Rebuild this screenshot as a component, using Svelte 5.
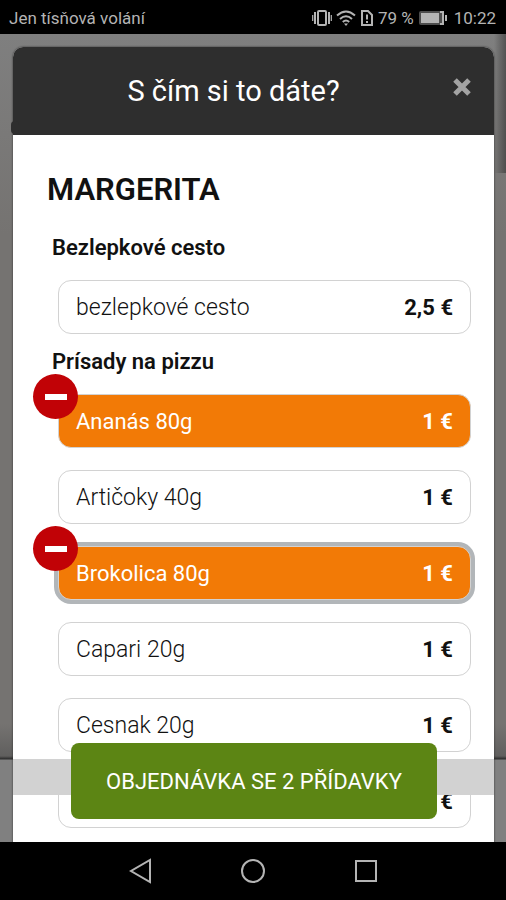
<script lang="ts">
  type Option = { id: string; name: string; price: string };
  type Group = { title: string; options: Option[] };

  const groups: Group[] = [
    {
      title: "Bezlepkové cesto",
      options: [{ id: "cesto", name: "bezlepkové cesto", price: "2,5 €" }],
    },
    {
      title: "Prísady na pizzu",
      options: [
        { id: "ananas", name: "Ananás 80g", price: "1 €" },
        { id: "articoky", name: "Artičoky 40g", price: "1 €" },
        { id: "brokolica", name: "Brokolica 80g", price: "1 €" },
        { id: "capari", name: "Capari 20g", price: "1 €" },
        { id: "cesnak", name: "Cesnak 20g", price: "1 €" },
        { id: "extra", name: "", price: "1 €" },
      ],
    },
  ];

  let selected = $state(["ananas", "brokolica"]);
  let active = $state("brokolica");

  function add(id: string) {
    active = id;
    if (!selected.includes(id)) selected.push(id);
  }

  function remove(id: string) {
    selected = selected.filter((item) => item !== id);
    if (active === id) active = "";
  }
</script>

<div class="phone">
  <header class="status">
    <span>Jen tísňová volání</span>
    <div class="indicators">
      <svg width="20" height="18" viewBox="0 0 20 18" fill="none" stroke="currentColor" stroke-width="2">
        <rect x="6" y="2" width="8" height="14" rx="1" />
        <path d="M3 3v12M17 3v12" />
        <path d="M0.7 6v6M19.3 6v6" stroke-width="1.2" />
      </svg>
      <svg width="20" height="18" viewBox="0 0 20 18" fill="none" stroke="currentColor" stroke-width="2">
        <path d="M1 6.500Q10-1.500 19 6.500M4 10Q10 4.500 16 10M6.800 13Q10 10 13.200 13" />
        <path d="M8 14.500h4L10 17z" fill="currentColor" stroke="none" />
      </svg>
      <svg width="14" height="18" viewBox="0 0 14 18" fill="none" stroke="currentColor" stroke-width="2">
        <path d="M2 2h6l4 4v10h-10z" />
        <path d="M7 5.500v5M7 12v2" />
      </svg>
      <span>79 %</span>
      <svg class="battery" width="30" height="18" viewBox="0 0 30 18">
        <rect x="1" y="2" width="25" height="14" rx="2" fill="#4d4d4d" />
        <rect x="3" y="4" width="18" height="10" fill="currentColor" />
        <path d="M22 3h3v12h-3M28 6v6" fill="none" stroke="currentColor" stroke-width="2" />
      </svg>
      <span class="clock">10:22</span>
    </div>
  </header>

  <main class="stage">
    <section class="modal">
      <div class="modal-head">
        <h1>S čím si to dáte?</h1>
        <button class="close" type="button" aria-label="Zavřít">
          <svg width="18" height="18" viewBox="0 0 18 18" stroke="currentColor" stroke-width="5">
            <path d="M2 2l14 14M16 2L2 16" />
          </svg>
        </button>
      </div>

      <div class="modal-body">
        <h2>MARGERITA</h2>
        {#each groups as group}
          <h3>{group.title}</h3>
          <ul>
            {#each group.options as option (option.id)}
              <li>
                <button
                  type="button"
                  class="option"
                  class:selected={selected.includes(option.id)}
                  class:active={active === option.id}
                  aria-pressed={selected.includes(option.id)}
                  onclick={() => add(option.id)}
                >
                  <span>{option.name}</span>
                  <strong>{option.price}</strong>
                </button>
                {#if selected.includes(option.id)}
                  <button
                    class="remove"
                    type="button"
                    aria-label="Odebrat {option.name}"
                    onclick={() => remove(option.id)}
                  >
                    <svg width="22" height="6" viewBox="0 0 22 6"><rect width="22" height="6" fill="#fff" /></svg>
                  </button>
                {/if}
              </li>
            {/each}
          </ul>
        {/each}
      </div>
    </section>

    <div class="order-bar">
      <button class="order" type="button">OBJEDNÁVKA SE {selected.length} PŘÍDAVKY</button>
    </div>
  </main>

  <nav class="softkeys">
    <button type="button" aria-label="Zpět">
      <svg width="26" height="26" viewBox="0 0 26 26"><path d="M23 2v22L4 13z" /></svg>
    </button>
    <button type="button" aria-label="Domů">
      <svg width="26" height="26" viewBox="0 0 26 26"><circle cx="13" cy="13" r="11" /></svg>
    </button>
    <button type="button" aria-label="Přehled">
      <svg width="26" height="26" viewBox="0 0 26 26"><rect x="3" y="3" width="20" height="20" /></svg>
    </button>
  </nav>
</div>

<style>
  :global(body) {
    margin: 0;
    background: #000;
  }

  .phone {
    display: flex;
    flex-direction: column;
    height: 100vh;
    font-family: Roboto, "Liberation Sans", sans-serif;
    color: #111;
  }

  button {
    border: none;
    padding: 0;
    background: none;
    color: inherit;
    font-family: inherit;
    cursor: pointer;
  }

  svg {
    display: block;
  }

  .status {
    display: flex;
    flex: none;
    align-items: center;
    justify-content: space-between;
    height: 34px;
    padding: 2px 10px 0 9px;
    box-sizing: border-box;
    background: #000;
    color: #b4b4b4;
    font-size: 17px;
    white-space: nowrap;
  }

  .indicators {
    display: flex;
    align-items: center;
    gap: 4px;
  }

  .clock {
    margin-left: 2px;
  }

  .stage {
    position: relative;
    flex: 1;
    min-height: 0;
    overflow: hidden;
    padding: 13px 12px 0 13px;
    background:
      linear-gradient(90deg, transparent, rgba(0, 0, 0, 0.35)) top right / 12px 139px no-repeat,
      linear-gradient(#7f7f7f, #757371 200px, #757371 690px, #605f5e 722px, #2c2c2c 725px, #808080 726px);
  }

  .modal {
    border-radius: 10px 10px 0 0;
    background: #fff;
    box-shadow: 0 0 2px #222;
  }

  .modal-head {
    position: relative;
    display: flex;
    align-items: center;
    justify-content: center;
    height: 88px;
    border-radius: 10px 10px 0 0;
    background: #2e2e2e;
    color: #fff;
  }

  /* end of the page's own dark bar, showing from under the dialog */
  .modal-head::before {
    content: "";
    position: absolute;
    bottom: 1px;
    left: -2px;
    width: 8px;
    height: 13px;
    border-radius: 4px;
    background: #2e2e2e;
  }

  h1 {
    margin: 0 40px 0 0;
    font-size: 29px;
    font-weight: 400;
  }

  .close {
    position: absolute;
    top: 31px;
    right: 23px;
    color: #a3a3a3;
  }

  .modal-body {
    padding: 35px 23px 40px 34px;
  }

  h2 {
    margin: 0;
    font-size: 31px;
    font-weight: 600;
    line-height: 40px;
  }

  h3 {
    margin: 22px 0 16px 5px;
    font-size: 22px;
    font-weight: 600;
    line-height: 32px;
  }

  ul {
    display: flex;
    flex-direction: column;
    gap: 22px;
    margin: 0 0 0 11px;
    padding: 0;
    list-style: none;
  }

  ul + h3 {
    margin-top: 12px;
  }

  li {
    position: relative;
  }

  .option {
    display: flex;
    align-items: center;
    justify-content: space-between;
    width: 100%;
    height: 54px;
    padding: 0 17px;
    box-sizing: border-box;
    border: 1px solid #d2d2d2;
    border-radius: 13px;
    background: #fff;
    font-size: 23px;
    font-weight: 300;
    text-align: left;
  }

  .option strong {
    font-size: 22px;
    font-weight: 700;
  }

  .option.selected {
    background: #f27a06;
    color: #fff;
    font-size: 22px;
    font-weight: 400;
  }

  .option.active {
    box-shadow: 0 0 0 4px #b2b6b9;
  }

  .remove {
    position: absolute;
    top: -20px;
    left: -25px;
    display: grid;
    place-items: center;
    width: 45px;
    height: 45px;
    border-radius: 50%;
    background: #c10206;
  }

  /* floating call to action above the scrolled list */
  .order-bar {
    position: absolute;
    right: 12px;
    bottom: 47px;
    left: 13px;
    display: flex;
    align-items: center;
    height: 36px;
    padding: 0 57px 0 58px;
    background: #d2d2d2;
  }

  .order {
    flex: 1;
    height: 76px;
    margin-top: 8px;
    border-radius: 8px;
    background: #5c8514;
    color: #fff;
    font-size: 22px;
    font-weight: 400;
    white-space: nowrap;
  }

  .softkeys {
    display: flex;
    flex: none;
    align-items: center;
    justify-content: center;
    gap: 87px;
    height: 58px;
    background: #000;
  }

  .softkeys svg {
    fill: none;
    stroke: #b4b4b4;
    stroke-width: 2;
  }
</style>
